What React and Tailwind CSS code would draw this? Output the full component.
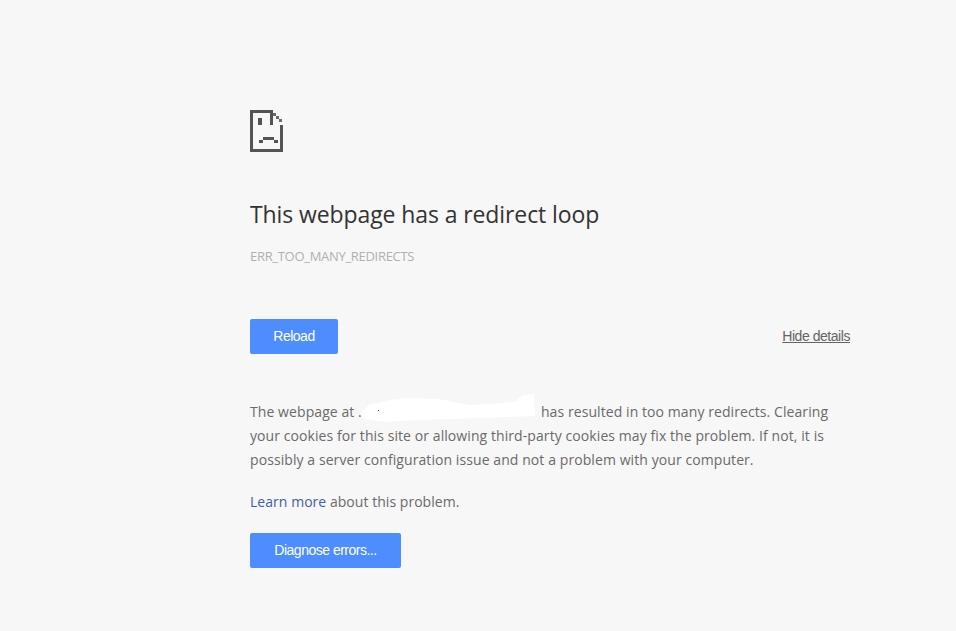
export default function App() {
  return (
    <div className="min-h-[631px] w-[956px] bg-[#f7f7f7] pl-[250px] pt-[110px] font-['Open_Sans',sans-serif] overflow-hidden">
      <div className="w-[600px]">
        <svg width="34" height="42" viewBox="0 0 34 42" shapeRendering="crispEdges" className="block" fill="#545454">
          <path d="M0 0h23v15h10v27H0zM3 3v36h27V15H20V3z" fillRule="evenodd" />
          <path d="M23 3h3v3h-3zM26 6h3v3h-3zM29 9h3v3h-3z" fill="#6a6a6a" />
          <path d="M8 8h4v7H8z" />
          <path d="M13 27h11v3H13zM9 30h4v3H9zM24 30h4v3h-4z" />
        </svg>
        <h1 className="mt-[47px] text-[23px] leading-[30px] font-normal text-[#333333] tracking-[-0.1px]">This webpage has a redirect loop</h1>
        <div className="mt-[19px] text-[13px] leading-[16px] text-[#b0b0b0] tracking-[-0.3px]">ERR_TOO_MANY_REDIRECTS</div>
        <div className="mt-[55px] flex items-center justify-between">
          <button className="h-[35px] w-[88px] rounded-[2px] bg-[#4d8dfd] text-[14px] text-white font-['Liberation_Sans',sans-serif] tracking-[-0.5px]">Reload</button>
          <a className="text-[14px] text-[#646464] underline tracking-[-0.45px] font-['Liberation_Sans',sans-serif]">Hide details</a>
        </div>
        <p className="mt-[46px] text-[14px] leading-[24px] text-[#6a6a6a] tracking-[0.08px]">
          The webpage at .<span className="relative inline-block w-[179px] h-[14px] align-middle"><svg className="absolute -top-[13px] left-0 overflow-visible" width="179" height="30" viewBox="0 0 179 30"><path d="M-1 19 L7 12 L27 7 L47 5 L77 6 L107 12 L127 11 L152 9 L162 2 L172 1 L173 23 L117 25 L57 27 L22 29 L-1 25 Z" fill="#ffffff" /><rect x="16" y="17" width="1" height="1" fill="#555555" /></svg></span>has resulted in too many redirects. Clearing your cookies for this site or allowing third-party cookies may fix the problem. If not, it is possibly a server configuration issue and not a problem with your computer.
        </p>
        <p className="mt-[18px] text-[14px] leading-[24px] text-[#6a6a6a] tracking-[0.04px]">
          <a className="text-[#3f5fa5]">Learn more</a> about this problem.
        </p>
        <button className="mt-[19px] h-[35px] w-[151px] rounded-[2px] bg-[#4d8dfd] text-[14px] text-white font-['Liberation_Sans',sans-serif] tracking-[-0.5px]">Diagnose errors...</button>
      </div>
    </div>
  );
}
